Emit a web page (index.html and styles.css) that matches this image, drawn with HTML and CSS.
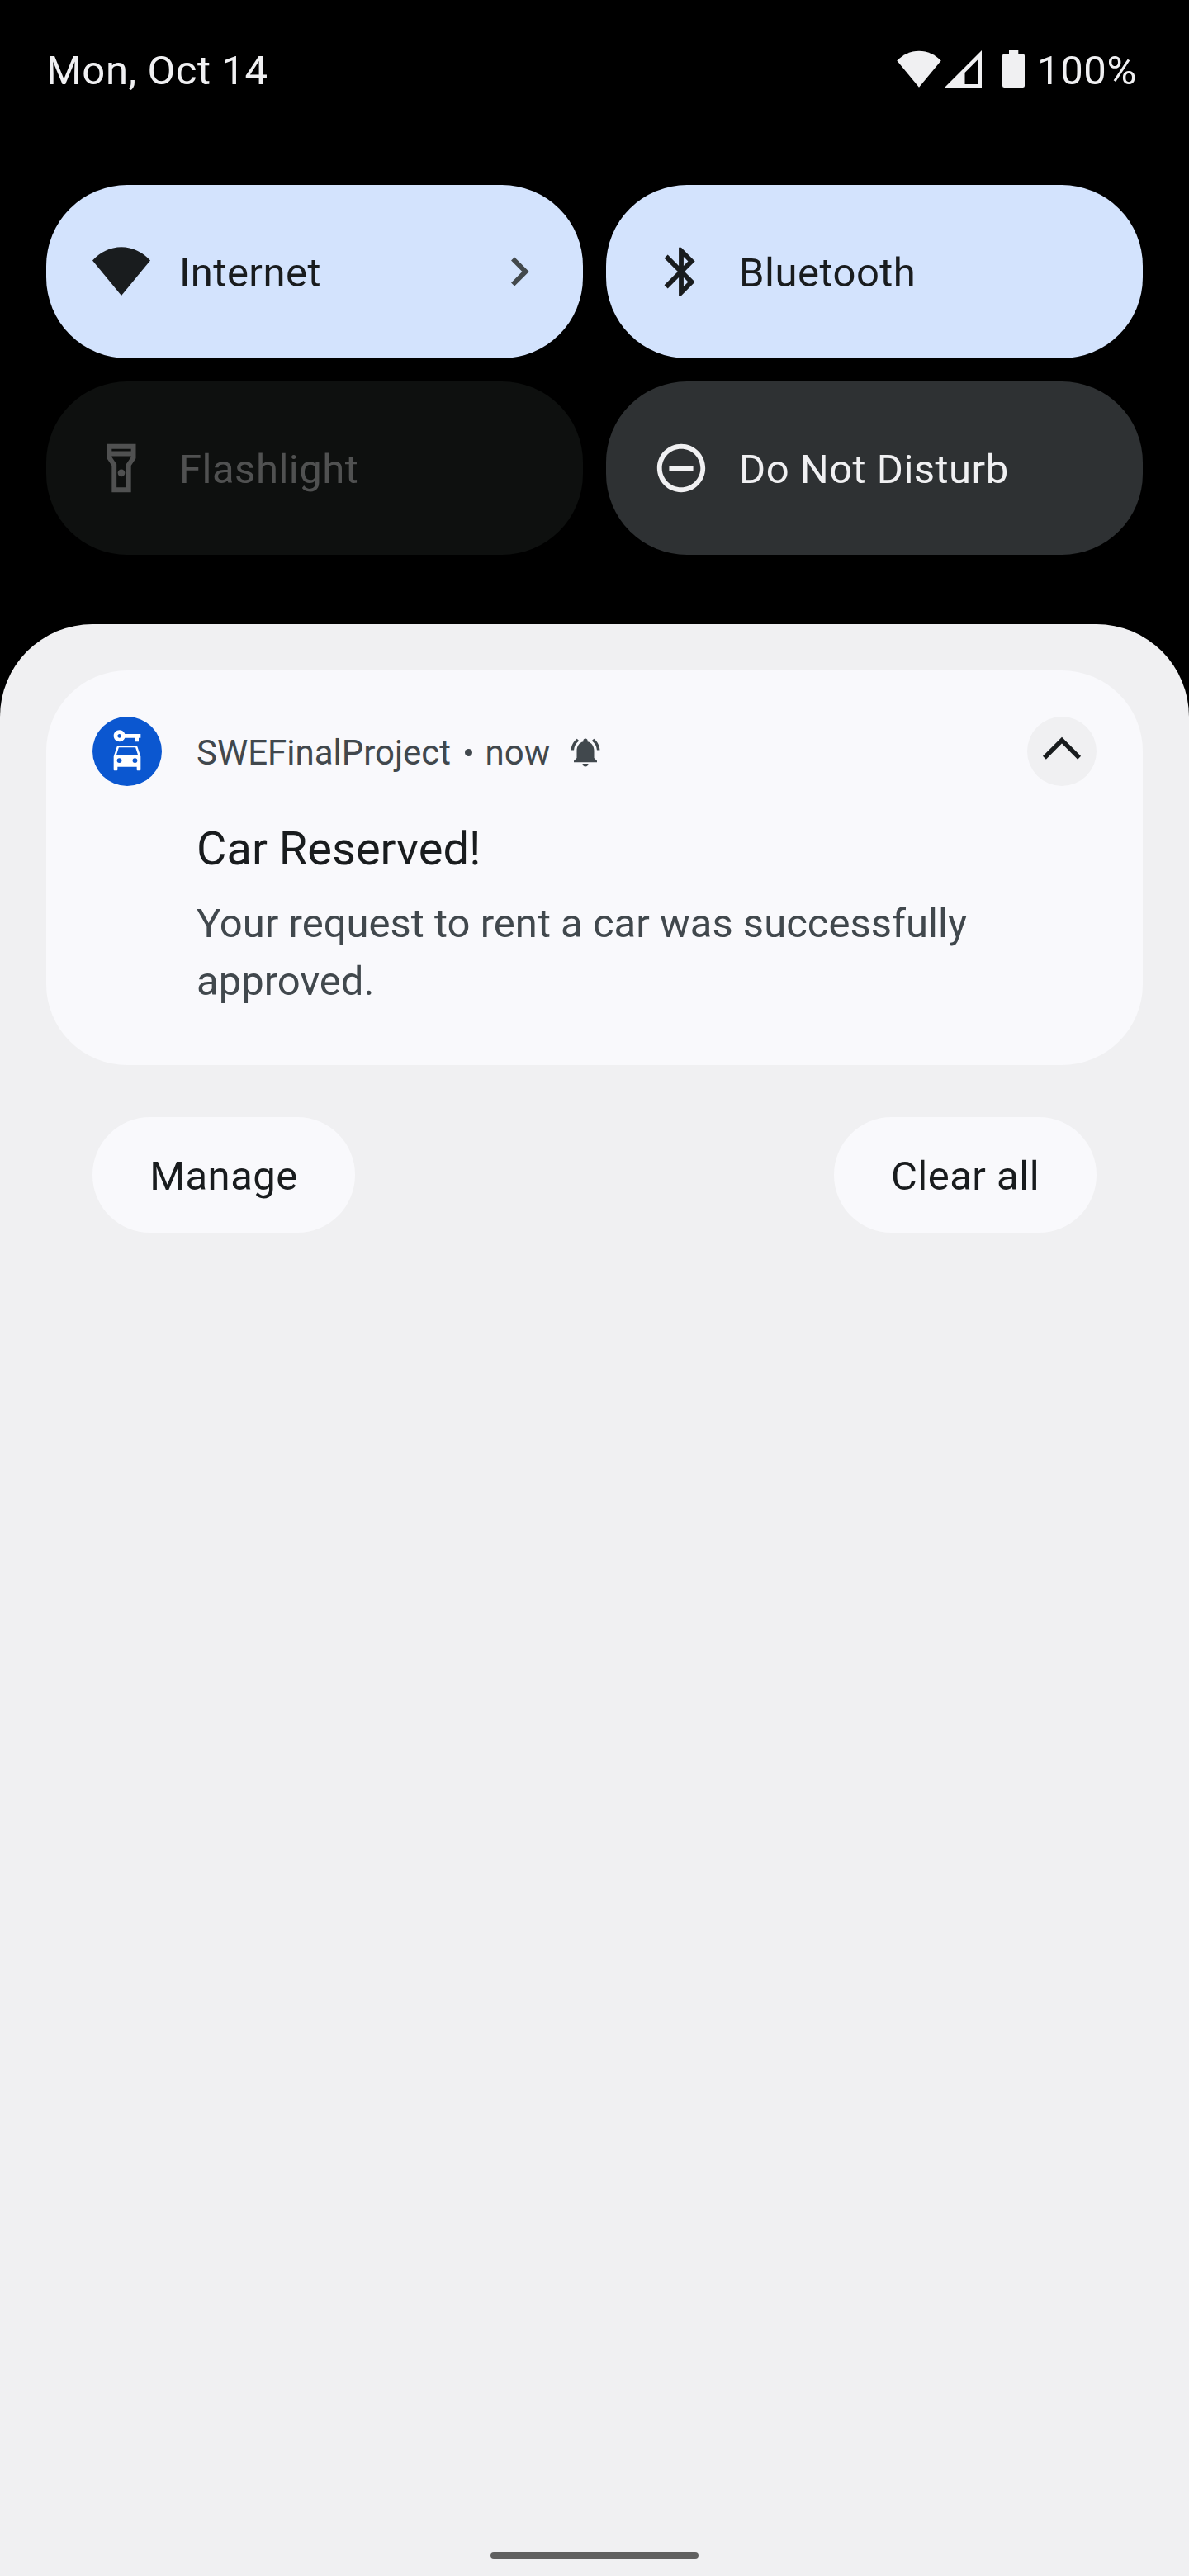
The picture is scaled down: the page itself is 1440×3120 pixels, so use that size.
FILE: index.html
```html
<!DOCTYPE html>
<html lang="en">
<head>
<meta charset="utf-8">
<title>Notifications</title>
<link rel="stylesheet" href="styles.css">
</head>
<body>
<div class="shade">
  <header class="status">
    <span class="date">Mon, Oct 14</span>
    <div class="status-icons">
      <svg class="wifi" viewBox="0 0 54 45"><path d="M27 .8C16.600 .8 7.300 5.300 .3 12.600L27 44.700 53.700 12.600C46.700 5.300 37.400 .8 27 .8z"/></svg>
      <svg class="signal" viewBox="0 0 45 45"><path fill-rule="evenodd" d="M45 0V45H0zM41 10.500L24.500 27V41H41z"/></svg>
      <svg class="battery" viewBox="0 0 27 45"><path d="M8 0H19.300V4.300H24.500A2.500 2.500 0 0 1 27 6.800V42.500A2.500 2.500 0 0 1 24.500 45H2.500A2.500 2.500 0 0 1 0 42.500V6.800A2.500 2.500 0 0 1 2.500 4.300H8z"/></svg>
      <span class="percent">100%</span>
    </div>
  </header>

  <section class="tiles">
    <div class="tile on">
      <svg class="icon" viewBox="0 0 24 24"><path d="M12 1.800C7.300 1.800 3.100 4 0 7.400L12 21.900 24 7.400C20.900 4 16.700 1.800 12 1.800z"/></svg>
      <span class="label">Internet</span>
      <svg class="icon chevron" viewBox="0 0 24 24"><path d="M8.590 16.590L13.170 12 8.590 7.410 10 6l6 6-6 6z"/></svg>
    </div>
    <div class="tile on">
      <svg class="icon" viewBox="0 0 24 24"><path d="M17.710 7.710L12 2h-1v7.590L6.410 5 5 6.410 10.590 12 5 17.590 6.410 19 11 14.410V22h1l5.710-5.710-4.300-4.290 4.300-4.290zM13 5.830l1.880 1.880L13 9.590V5.830zm1.880 10.460L13 18.170v-3.760l1.880 1.880z"/></svg>
      <span class="label">Bluetooth</span>
    </div>
    <div class="tile disabled">
      <svg class="icon" viewBox="0 0 24 24"><path fill-rule="evenodd" d="M6 2v6l2 3v11h8V11l2-3V2zM16 4v1H8V4zM14 10.400V20h-4v-9.600L8 7.400V7h8v.4z"/><circle cx="12" cy="14" r="1.500"/></svg>
      <span class="label">Flashlight</span>
    </div>
    <div class="tile off">
      <svg class="icon" viewBox="0 0 24 24"><path d="M7 11h10v2H7zM12 2C6.480 2 2 6.480 2 12s4.480 10 10 10 10-4.480 10-10S17.520 2 12 2zm0 18c-4.410 0-8-3.590-8-8s3.590-8 8-8 8 3.590 8 8-3.590 8-8 8z"/></svg>
      <span class="label">Do Not Disturb</span>
    </div>
  </section>

  <main class="sheet">
    <article class="card">
      <div class="app-icon">
        <svg viewBox="0 0 24 24"><path fill-rule="evenodd" d="M10.830 3C10.410 1.830 9.300 1 8 1 6.340 1 5 2.340 5 4s1.340 3 3 3c1.300 0 2.410-.84 2.830-2H16v2h2V5h1V3zM8 5c-.55 0-1-.45-1-1s.45-1 1-1 1 .45 1 1-.45 1-1 1z"/><path fill-rule="evenodd" d="M16.390 9H7.610c-.43 0-.81.28-.95.680L5 14.690v6.810c0 .28.22.5.5.5h1c.28 0 .5-.22.5-.5V20h10v1.500c0 .28.22.5.5.5h1c.28 0 .5-.22.5-.5v-6.810l-1.660-5.010C17.200 9.280 16.820 9 16.390 9zM7.670 10h8.660l1.330 4H6.340zM7.950 18a1.250 1.250 0 1 1 0-2.500 1.250 1.250 0 0 1 0 2.500zM16.050 18a1.250 1.250 0 1 1 0-2.500 1.250 1.250 0 0 1 0 2.500z"/></svg>
      </div>
      <div class="content">
        <div class="meta">
          <span>SWEFinalProject</span>
          <span class="dot"></span>
          <span>now</span>
          <svg class="bell" viewBox="0 0 24 24"><path d="M7.580 4.080L6.150 2.650C3.750 4.480 2.170 7.300 2.030 10.500h2c.15-2.650 1.510-4.970 3.550-6.420zM19.970 10.500h2c-.15-3.200-1.730-6.020-4.120-7.850l-1.420 1.430c2.020 1.450 3.390 3.770 3.540 6.420zM18 11c0-3.070-1.640-5.640-4.500-6.320V4c0-.83-.67-1.500-1.500-1.500s-1.500.67-1.500 1.500v.68C7.630 5.360 6 7.920 6 11v5l-2 2v1h16v-1l-2-2zM12 22c1.100 0 2-.9 2-2h-4c0 1.100.89 2 2 2z"/></svg>
        </div>
        <h1 class="title">Car Reserved!</h1>
        <p class="body">Your request to rent a car was successfully approved.</p>
      </div>
      <button class="collapse" aria-label="Collapse"><svg viewBox="0 0 84 84"><path d="M20.900 49.700L42 28.600 63.100 49.700"/></svg></button>
    </article>
    <div class="actions">
      <button class="pill">Manage</button>
      <button class="pill">Clear all</button>
    </div>
    <div class="home-bar"></div>
  </main>
</div>
</body>
</html>
```

FILE: styles.css
```css
* { box-sizing: border-box; }

body {
  margin: 0;
  background: #000;
  font-family: Roboto, "Liberation Sans", sans-serif;
  font-size: 49px;
  line-height: 70px;
}

svg { display: block; flex: none; }

button {
  border: 0;
  padding: 0;
  font: inherit;
}

.shade {
  display: flex;
  flex-direction: column;
  width: 1440px;
  height: 3120px;
  overflow: hidden;
}

.status {
  display: flex;
  align-items: center;
  justify-content: space-between;
  height: 224px;
  padding: 0 62px 52px 56px;
  color: #f0f0f2;
  letter-spacing: 0.012em;
}

.status-icons {
  display: flex;
  align-items: center;
  fill: #f0f0f2;
}

.wifi { width: 54px; height: 45px; margin: -5px 4px 0 0; }
.signal { width: 45px; height: 45px; margin: -5px 25px 0 0; }
.battery { width: 27px; height: 45px; margin: -5px 0 0; }
.percent { width: 122px; margin-left: 15px; white-space: nowrap; }

.tiles {
  display: grid;
  grid-template-columns: 650px 650px;
  grid-auto-rows: 210px;
  gap: 28px;
  padding: 0 56px;
}

.tile {
  display: flex;
  align-items: center;
  gap: 35px;
  padding: 0 42px 0 56px;
  border-radius: 98px;
  letter-spacing: 0.01em;
}

.icon { width: 70px; height: 70px; fill: currentColor; }
.label { flex: 1; padding-top: 4px; }
.chevron { color: #43494c; }

.on { background: #d3e3fd; color: #191c1e; }
.disabled { background: #0e100f; color: #505151; }
.off { background: #2e3133; color: #f0f0f2; }

.sheet {
  display: flex;
  flex-direction: column;
  flex: 1;
  margin-top: 84px;
  padding: 56px 56px 21px;
  border-radius: 112px 112px 0 0;
  background: #f0f0f2;
}

.card {
  display: flex;
  align-items: flex-start;
  height: 478px;
  padding: 56px;
  border-radius: 98px;
  background: #f9f9fc;
}

.app-icon {
  display: flex;
  align-items: center;
  justify-content: center;
  width: 84px;
  height: 84px;
  border-radius: 50%;
  background: #0b57d0;
}

.app-icon svg { width: 56px; height: 56px; fill: #fff; }

.content { flex: 1; padding-left: 42px; color: #41484d; }

.meta {
  display: flex;
  align-items: center;
  height: 84px;
  padding-top: 4px;
  font-size: 42px;
}

.dot {
  width: 9px;
  height: 9px;
  margin: -2px 15.5px 0 17px;
  border-radius: 50%;
  background: currentColor;
}

.bell { width: 42px; height: 42px; margin: -2px 0 0 22px; fill: currentColor; }

.title {
  margin: 41px 0 0;
  color: #191c1e;
  font-size: 56px;
  font-weight: 400;
  line-height: 70px;
}

.body { width: 960px; margin: 21px 0 0; }

.collapse {
  width: 84px;
  height: 84px;
  border-radius: 50%;
  background: #f0f0f2;
}

.collapse path { fill: none; stroke: #191c1e; stroke-width: 5.500; }

.actions {
  display: flex;
  justify-content: space-between;
  padding: 63px 56px 0;
}

.pill {
  width: 318px;
  height: 140px;
  padding-top: 4px;
  border-radius: 70px;
  background: #f9f9fc;
  color: #191c1e;
  letter-spacing: 0.01em;
}

.home-bar {
  width: 252px;
  height: 8px;
  margin: auto auto 0;
  border-radius: 4px;
  background: #606060;
}
```
